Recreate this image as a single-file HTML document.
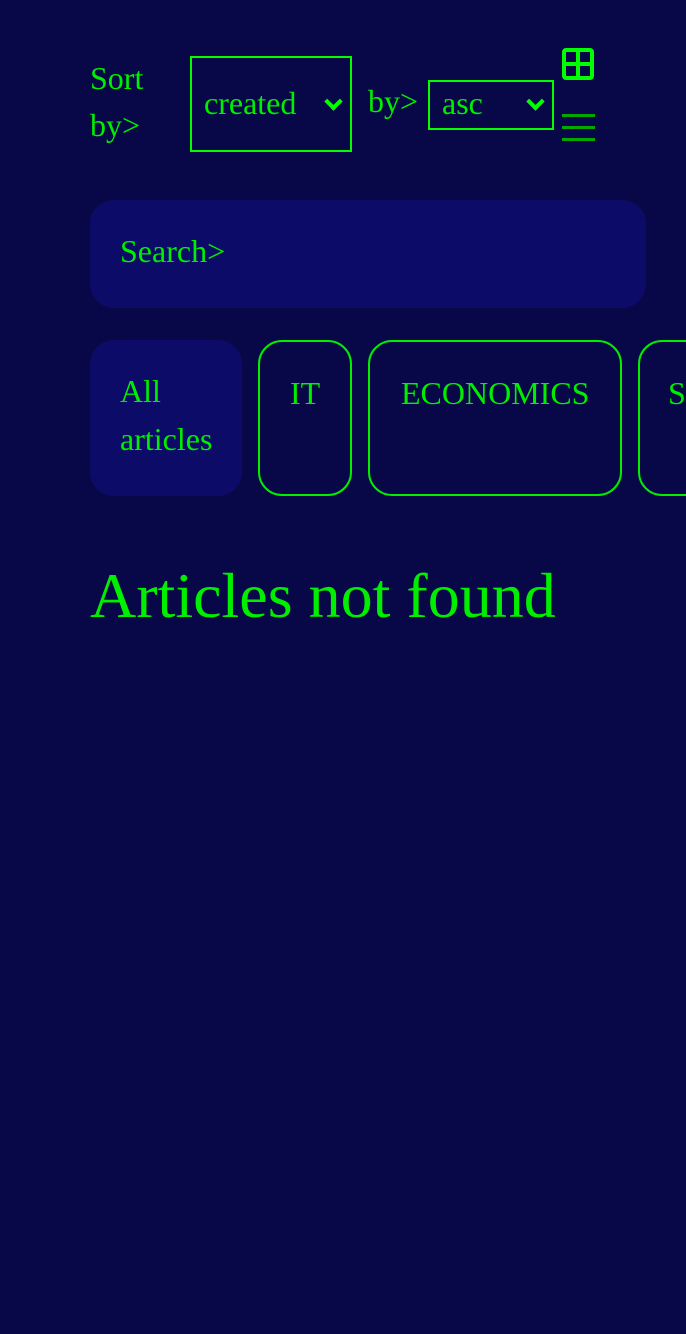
<!DOCTYPE html>
<html><head><style>
html,body{margin:0;padding:0;}
body{width:686px;height:1334px;background:#080848;font-family:"Liberation Serif",serif;color:#00ee00;position:relative;overflow:hidden;}
.a{position:absolute;white-space:nowrap;}
.t{font-size:32px;line-height:48px;}
.box{position:absolute;box-sizing:border-box;border:2px solid #00ff00;}
.chev{position:absolute;width:9px;height:9px;border-right:4px solid #00ff00;border-bottom:4px solid #00ff00;transform:rotate(45deg);}
.chip{position:absolute;box-sizing:border-box;border:2px solid #00ee00;border-radius:24px;height:156px;top:340px;}
</style></head><body>
<div class="a t" style="left:90px;top:54px;">Sort</div>
<div class="a t" style="left:90px;top:101px;">by&gt;</div>
<div class="box" style="left:190px;top:56px;width:162px;height:96px;"></div>
<div class="a t" style="left:204px;top:79px;">created</div>
<div class="chev" style="left:327px;top:95px;"></div>
<div class="a t" style="left:368px;top:77px;">by&gt;</div>
<div class="box" style="left:428px;top:80px;width:126px;height:50px;"></div>
<div class="a t" style="left:442px;top:79px;">asc</div>
<div class="chev" style="left:529px;top:95px;"></div>
<div style="position:absolute;left:562px;top:48px;width:32px;height:32px;box-sizing:border-box;border:4px solid #00ff00;border-radius:4px;"></div>
<div style="position:absolute;left:576px;top:48px;width:4px;height:32px;background:#00ff00;"></div>
<div style="position:absolute;left:562px;top:62px;width:32px;height:4px;background:#00ff00;"></div>
<div style="position:absolute;left:562px;top:114px;width:33px;height:3px;background:#00a800;"></div>
<div style="position:absolute;left:562px;top:126px;width:33px;height:3px;background:#00a800;"></div>
<div style="position:absolute;left:562px;top:138px;width:33px;height:3px;background:#00a800;"></div>
<div style="position:absolute;left:90px;top:200px;width:556px;height:108px;background:#0c0c68;border-radius:24px;"></div>
<div class="a t" style="left:120px;top:227px;">Search&gt;</div>
<div style="position:absolute;left:90px;top:340px;width:152px;height:156px;background:#0c0c68;border-radius:24px;"></div>
<div class="a t" style="left:120px;top:367px;">All</div>
<div class="a t" style="left:120px;top:415px;">articles</div>
<div class="chip" style="left:258px;width:94px;"></div>
<div class="a t" style="left:290px;top:369px;">IT</div>
<div class="chip" style="left:368px;width:254px;"></div>
<div class="a t" style="left:401px;top:369px;">ECONOMICS</div>
<div class="chip" style="left:638px;width:100px;"></div>
<div class="a t" style="left:668px;top:369px;">S</div>
<div class="a" style="left:90px;top:556px;font-size:64px;line-height:80px;">Articles not found</div>
</body></html>
